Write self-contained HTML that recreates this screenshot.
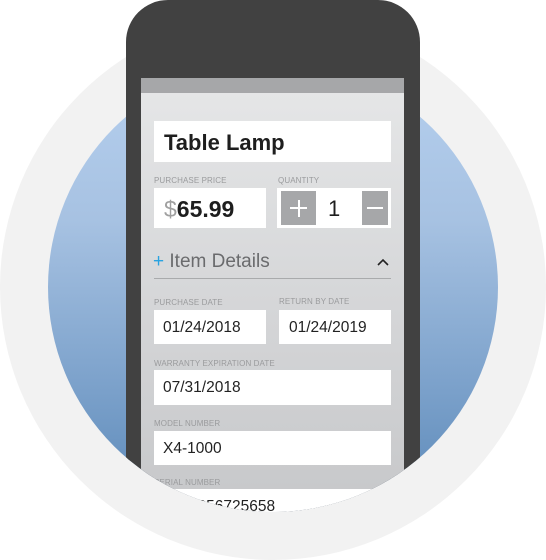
<!DOCTYPE html>
<html><head><style>
html,body{margin:0;padding:0;background:#fff;}
body{width:546px;height:560px;position:relative;overflow:hidden;font-family:"Liberation Sans",sans-serif;}
.outer{position:absolute;left:0;top:14px;width:546px;height:546px;border-radius:50%;background:#f2f2f2;}
.blue{position:absolute;left:48px;top:62px;width:450px;height:450px;border-radius:50%;background:linear-gradient(#b6d0ef,#a7c2e2 35%,#7ea3cc 70%,#5a88b8);}
.clip{position:absolute;left:0;top:0;width:546px;height:560px;clip-path:path("M0 0 H546 V287 H498 A225 225 0 0 1 48 287 H0 Z");}
.phone{position:absolute;left:126px;top:0;width:294px;height:560px;background:#414141;border-radius:42px 42px 0 0;}
.screen{position:absolute;left:141px;top:78px;width:263px;height:482px;background:linear-gradient(#e6e7e8,#d4d5d7 50%,#c3c4c6);}
.bar{position:absolute;left:141px;top:78px;width:263px;height:15px;background:#a6a7a9;}
.box{position:absolute;background:#fff;color:#222;}
.lbl{position:absolute;font-size:8px;color:#9a9b9d;letter-spacing:0.1px;}
.val{position:absolute;left:11px;font-size:17px;}
.btn{position:absolute;background:#a6a7a9;color:#fff;text-align:center;}
</style></head><body>
<div class="outer"></div>
<div class="blue"></div>
<div class="clip">
<div class="phone"></div>
<div class="screen"></div>
<div class="bar"></div>

<div class="box" style="left:154px;top:121px;width:237px;height:41px;"><div style="position:absolute;left:10px;top:9px;font-size:22px;font-weight:bold;color:#1e1e1e;">Table Lamp</div></div>

<div class="lbl" style="left:154px;top:176px;">PURCHASE PRICE</div>
<div class="lbl" style="left:278px;top:176px;">QUANTITY</div>
<div class="box" style="left:154px;top:188px;width:112px;height:40px;"><div style="position:absolute;left:10px;top:8px;font-size:23px;"><span style="color:#a0a0a0;font-weight:normal;">$</span><b style="color:#1e1e1e;">65.99</b></div></div>
<div class="box" style="left:277px;top:188px;width:114px;height:40px;">
 <div class="btn" style="left:4px;top:3px;width:35px;height:34px;"><div style="position:absolute;left:9px;top:16px;width:17px;height:2px;background:#fff;"></div><div style="position:absolute;left:16.5px;top:8.5px;width:2px;height:17px;background:#fff;"></div></div>
 <div style="position:absolute;left:51px;top:8px;font-size:22px;color:#1e1e1e;">1</div>
 <div class="btn" style="left:85px;top:3px;width:26px;height:34px;"><div style="position:absolute;left:5px;top:16px;width:16px;height:2px;background:#fff;"></div></div>
</div>

<div style="position:absolute;left:153px;top:251px;font-size:19px;color:#6a6b6d;"><span style="color:#29a3e0;">+</span> Item Details</div>
<svg style="position:absolute;left:376px;top:257px;" width="14" height="10"><path d="M2 8 L7 3 L12 8" stroke="#222" stroke-width="1.6" fill="none"/></svg>
<div style="position:absolute;left:154px;top:278px;width:237px;height:1px;background:#a9aaac;"></div>

<div class="lbl" style="left:154px;top:298px;">PURCHASE DATE</div>
<div class="lbl" style="left:279px;top:297px;">RETURN BY DATE</div>
<div class="box" style="left:154px;top:310px;width:112px;height:34px;"><div class="val" style="top:9px;left:9px;font-size:15.5px;">01/24/2018</div></div>
<div class="box" style="left:279px;top:310px;width:112px;height:34px;"><div class="val" style="top:9px;left:10px;font-size:15.5px;">01/24/2019</div></div>

<div class="lbl" style="left:154px;top:359px;">WARRANTY EXPIRATION DATE</div>
<div class="box" style="left:154px;top:370px;width:237px;height:35px;"><div class="val" style="top:9px;left:9px;font-size:15.5px;">07/31/2018</div></div>

<div class="lbl" style="left:154px;top:419px;">MODEL NUMBER</div>
<div class="box" style="left:154px;top:431px;width:237px;height:34px;"><div class="val" style="top:9px;left:9px;font-size:15.5px;">X4-1000</div></div>

<div class="lbl" style="left:154px;top:478px;">SERIAL NUMBER</div>
<div class="box" style="left:154px;top:489px;width:237px;height:34px;"><div class="val" style="top:9px;left:9px;font-size:15.5px;">1020056725658</div></div>
</div>
</body></html>
